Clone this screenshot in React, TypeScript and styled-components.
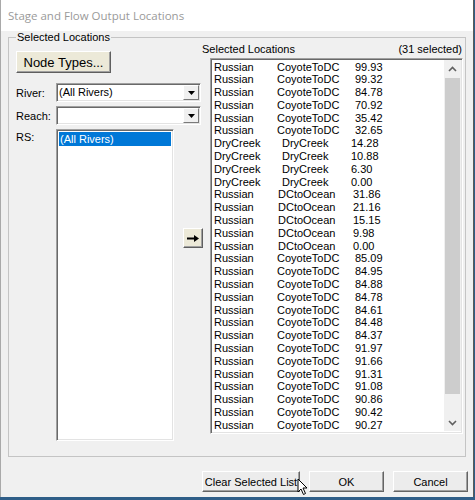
import React from "react";
import styled, { createGlobalStyle } from "styled-components";

const GlobalStyle = createGlobalStyle`
  html, body {
    margin: 0;
    padding: 0;
    background: #2f5e88;
  }
  body {
    font-family: "Liberation Sans", Arial, sans-serif;
    font-size: 11px;
    color: #000;
  }
`;

const Window = styled.div`
  position: relative;
  box-sizing: border-box;
  width: 474px;
  height: 497px;
  background: #f0f0f0;
  border-left: 1px solid #a9a9a9;
  border-right: 1px solid #5a5a5a;
  display: flex;
  flex-direction: column;
`;

const TitleBar = styled.div`
  height: 31px;
  flex: none;
  background: #fff;
  display: flex;
  align-items: center;
  padding-left: 7px;
  font-family: "Open Sans", "Noto Sans", sans-serif;
  font-size: 11.5px;
  color: #9a9a9a;
`;

const Body = styled.div`
  flex: 1;
  display: flex;
  flex-direction: column;
  padding: 0 5px 0 7px;
`;

const GroupBox = styled.fieldset`
  box-sizing: border-box;
  width: 458px;
  height: 426px;
  margin: 0;
  padding: 0 0 0 7px;
  border: 1px solid #c4c4c4;
  display: flex;
  align-items: flex-start;
`;

const Legend = styled.legend`
  padding: 0 1px;
  line-height: 13px;
  font-size: 11px;
`;

const LeftPanel = styled.div`
  width: 187px;
  margin-top: 7px;
  display: flex;
  flex-direction: column;
`;

const BeigeButton = styled.button<{ $w: number; $h: number; $size?: number }>`
  box-sizing: border-box;
  width: ${(p) => p.$w}px;
  height: ${(p) => p.$h}px;
  padding: 0;
  background: #ece9d8;
  border: 1px solid;
  border-color: #fff #5f5f5f #5f5f5f #fff;
  box-shadow: inset -1px -1px 0 #a0a0a0;
  font-family: "Liberation Sans", Arial, sans-serif;
  font-size: ${(p) => p.$size ?? 11}px;
  color: #000;
  display: flex;
  align-items: center;
  justify-content: center;
`;

const FieldRow = styled.div<{ $top: number }>`
  display: flex;
  align-items: center;
  margin-top: ${(p) => p.$top}px;
`;

const Label = styled.span`
  width: 40px;
  flex: none;
`;

const Sunken = styled.div`
  box-sizing: border-box;
  background: #fff;
  border: 1px solid;
  border-color: #a0a0a0 #fff #fff #a0a0a0;
  box-shadow: inset 1px 1px 0 #696969, inset -1px -1px 0 #e3e3e3;
`;

const Combo = styled(Sunken)`
  width: 145px;
  height: 19px;
  display: flex;
  align-items: center;
  padding: 0 1px 0 2px;
`;

const ComboText = styled.span`
  flex: 1;
  line-height: 13px;
`;

const DropButton = styled.span`
  box-sizing: border-box;
  width: 16px;
  height: 15px;
  background: #f0f0f0;
  border: 1px solid;
  border-color: #fff #7a7a7a #7a7a7a #fff;
  display: flex;
  align-items: center;
  justify-content: center;
`;

const RsRow = styled.div`
  display: flex;
  align-items: flex-start;
  margin-top: 4px;
`;

const RsLabel = styled(Label)`
  line-height: 16px;
`;

const RsList = styled(Sunken)`
  width: 118px;
  height: 312px;
  padding: 2px;
`;

const SelectedItem = styled.div`
  background: #0078d7;
  color: #fff;
  line-height: 14px;
  padding-left: 1px;
`;

const ArrowButton = styled(BeigeButton)`
  margin: 99px 0 0 9px;
`;

const RightPanel = styled.div`
  width: 261px;
  margin: -1px 0 0 -1px;
  display: flex;
  flex-direction: column;
`;

const Header = styled.div`
  display: flex;
  justify-content: space-between;
  line-height: 13px;
  padding-right: 1px;
`;

const LocList = styled(Sunken)`
  width: 253px;
  height: 376px;
  margin: 2px 0 0 8px;
  padding: 1.5px 1px 2px 2px;
  display: flex;
`;

const Rows = styled.div`
  flex: 1;
  padding: 0 0 0 1px;
  overflow: hidden;
`;

const Row = styled.div<{ $c1: number; $c2: number }>`
  display: grid;
  grid-template-columns: ${(p) => p.$c1}px ${(p) => p.$c2}px auto;
  height: 12.8px;
  line-height: 12.8px;
  white-space: nowrap;
`;

const ScrollBar = styled.div`
  width: 17px;
  margin-top: -0.5px;
  background: #f0f0f0;
  display: flex;
  flex-direction: column;
`;

const ScrollArrow = styled.div`
  height: 17px;
  display: flex;
  align-items: center;
  justify-content: center;
`;

const Track = styled.div`
  flex: 1;
  padding: 1px 1px 0;
`;

const Thumb = styled.div`
  height: 316px;
  background: #cdcdcd;
`;

const ButtonRow = styled.div`
  display: flex;
  justify-content: flex-end;
  gap: 9px;
  margin-top: 14px;
`;

const DialogButton = styled.button<{ $w: number }>`
  box-sizing: border-box;
  width: ${(p) => p.$w}px;
  height: 21px;
  padding: 0;
  background: #ececec;
  border: 1px solid;
  border-color: #fff #646464 #646464 #fff;
  box-shadow: inset -1px -1px 0 #a0a0a0;
  font-family: "Liberation Sans", Arial, sans-serif;
  font-size: 11px;
  color: #000;
`;

const Cursor = styled.svg`
  position: absolute;
  left: 296px;
  top: 478px;
`;

type Loc = [string, string, string];

const groups: { cols: [number, number]; rows: Loc[] }[] = [
  {
    cols: [63, 78],
    rows: ["99.93", "99.32", "84.78", "70.92", "35.42", "32.65"].map(
      (v) => ["Russian", "CoyoteToDC", v] as Loc
    ),
  },
  {
    cols: [68, 69],
    rows: ["14.28", "10.88", "6.30", "0.00"].map(
      (v) => ["DryCreek", "DryCreek", v] as Loc
    ),
  },
  {
    cols: [64, 75],
    rows: ["31.86", "21.16", "15.15", "9.98", "0.00"].map(
      (v) => ["Russian", "DCtoOcean", v] as Loc
    ),
  },
  {
    cols: [63, 78],
    rows: [
      "85.09", "84.95", "84.88", "84.78", "84.61", "84.48", "84.37",
      "91.97", "91.66", "91.31", "91.08", "90.86", "90.42", "90.27",
    ].map((v) => ["Russian", "CoyoteToDC", v] as Loc),
  },
];

function Triangle() {
  return (
    <svg width="7" height="4" viewBox="0 0 7 4">
      <polygon points="0,0 7,0 3.5,4" fill="#000" />
    </svg>
  );
}

function Chevron({ up }: { up?: boolean }) {
  return (
    <svg width="9" height="6" viewBox="0 0 9 6">
      <polyline
        points={up ? "1,5 4.5,1.5 8,5" : "1,1 4.5,4.5 8,1"}
        fill="none"
        stroke="#606060"
        strokeWidth="1.6"
      />
    </svg>
  );
}

function Combobox({ value }: { value?: string }) {
  return (
    <Combo>
      <ComboText>{value}</ComboText>
      <DropButton>
        <Triangle />
      </DropButton>
    </Combo>
  );
}

export default function App() {
  return (
    <>
      <GlobalStyle />
      <Window>
        <TitleBar>Stage and Flow Output Locations</TitleBar>
        <Body>
          <GroupBox>
            <Legend>Selected Locations</Legend>
            <LeftPanel>
              <BeigeButton $w={95} $h={22} $size={13}>
                Node Types...
              </BeigeButton>
              <FieldRow $top={10}>
                <Label>River:</Label>
                <Combobox value="(All Rivers)" />
              </FieldRow>
              <FieldRow $top={4}>
                <Label>Reach:</Label>
                <Combobox />
              </FieldRow>
              <RsRow>
                <RsLabel>RS:</RsLabel>
                <RsList>
                  <SelectedItem>(All Rivers)</SelectedItem>
                </RsList>
                <ArrowButton $w={20} $h={20}>
                  <svg width="12" height="7" viewBox="0 0 12 7">
                    <rect x="0" y="2.5" width="8" height="2" fill="#000" />
                    <polygon points="7,0 12,3.5 7,7" fill="#000" />
                  </svg>
                </ArrowButton>
              </RsRow>
            </LeftPanel>
            <RightPanel>
              <Header>
                <span>Selected Locations</span>
                <span>(31 selected)</span>
              </Header>
              <LocList>
                <Rows>
                  {groups.map((g) =>
                    g.rows.map(([river, reach, rs], i) => (
                      <Row key={reach + rs + i} $c1={g.cols[0]} $c2={g.cols[1]}>
                        <span>{river}</span>
                        <span>{reach}</span>
                        <span>{rs}</span>
                      </Row>
                    ))
                  )}
                </Rows>
                <ScrollBar>
                  <ScrollArrow>
                    <Chevron up />
                  </ScrollArrow>
                  <Track>
                    <Thumb />
                  </Track>
                  <ScrollArrow>
                    <Chevron />
                  </ScrollArrow>
                </ScrollBar>
              </LocList>
            </RightPanel>
          </GroupBox>
          <ButtonRow>
            <DialogButton $w={98}>Clear Selected List</DialogButton>
            <DialogButton $w={75}>OK</DialogButton>
            <DialogButton $w={75}>Cancel</DialogButton>
          </ButtonRow>
        </Body>
        <Cursor width="12" height="18" viewBox="0 0 12 18">
          <path
            d="M1,1 L1,14 L4,11 L6.5,16.5 L8.5,15.5 L6,10 L10,10 Z"
            fill="#fff"
            stroke="#000"
            strokeWidth="1"
            strokeLinejoin="round"
          />
        </Cursor>
      </Window>
    </>
  );
}
